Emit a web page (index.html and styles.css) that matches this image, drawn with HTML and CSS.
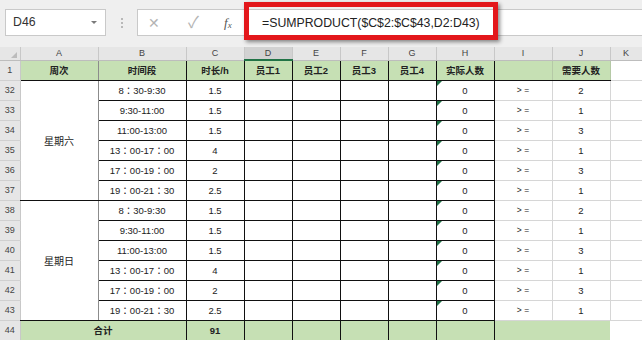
FILE: index.html
```html
<!DOCTYPE html>
<html lang="zh">
<head>
  <meta charset="utf-8">
  <title>排班表</title>
  <link rel="stylesheet" href="styles.css">
</head>
<body>
  <!-- 编辑栏 -->
  <div class="toolbar">
    <div class="namebox">D46<span class="dd"></span></div>
    <div class="grip"><i></i><i></i><i></i></div>
    <div class="fbar">
      <span class="ico x">✕</span>
      <span class="ico ok">✓</span>
      <span class="ico fx">f<sub>x</sub></span>
      <span class="formula">=SUMPRODUCT($C$2:$C$43,D2:D43)</span>
    </div>
  </div>

  <table class="sheet">
    <colgroup>
      <col style="width:20px"><col style="width:78px"><col style="width:88px"><col style="width:58px">
      <col style="width:48px"><col style="width:48px"><col style="width:48px"><col style="width:48px">
      <col style="width:58px"><col style="width:58px"><col style="width:58px"><col style="width:32px">
    </colgroup>
    <tr class="hdr">
      <th class="corner"><span></span></th>
      <th>A</th><th>B</th><th>C</th><th class="sel">D</th><th>E</th><th>F</th><th>G</th><th>H</th><th>I</th><th>J</th><th>K</th>
    </tr>
    <tr class="r1">
      <th class="rh">1</th>
      <td class="b a g">周次</td><td class="b g">时间段</td><td class="b g">时长/h</td>
      <td class="b g">员工1</td><td class="b g">员工2</td><td class="b g">员工3</td><td class="b g">员工4</td>
      <td class="b g">实际人数</td><td class="gl g"></td><td class="gl g">需要人数</td><td class="gl"></td>
    </tr>
    <tr>
      <th class="rh">32</th>
      <td class="b a day" rowspan="6">星期六</td>
      <td class="b t">8：30-9:30</td><td class="b">1.5</td>
      <td class="b"></td><td class="b"></td><td class="b"></td><td class="b"></td>
      <td class="b h"><span class="tri"></span>0</td><td class="gl ge">&gt; =</td><td class="gl">2</td><td class="gl"></td>
    </tr>
    <tr>
      <th class="rh">33</th>
      <td class="b t">9:30-11:00</td><td class="b">1.5</td>
      <td class="b"></td><td class="b"></td><td class="b"></td><td class="b"></td>
      <td class="b h"><span class="tri"></span>0</td><td class="gl ge">&gt; =</td><td class="gl">1</td><td class="gl"></td>
    </tr>
    <tr>
      <th class="rh">34</th>
      <td class="b t">11:00-13:00</td><td class="b">1.5</td>
      <td class="b"></td><td class="b"></td><td class="b"></td><td class="b"></td>
      <td class="b h"><span class="tri"></span>0</td><td class="gl ge">&gt; =</td><td class="gl">3</td><td class="gl"></td>
    </tr>
    <tr>
      <th class="rh">35</th>
      <td class="b t">13：00-17：00</td><td class="b">4</td>
      <td class="b"></td><td class="b"></td><td class="b"></td><td class="b"></td>
      <td class="b h"><span class="tri"></span>0</td><td class="gl ge">&gt; =</td><td class="gl">1</td><td class="gl"></td>
    </tr>
    <tr>
      <th class="rh">36</th>
      <td class="b t">17：00-19：00</td><td class="b">2</td>
      <td class="b"></td><td class="b"></td><td class="b"></td><td class="b"></td>
      <td class="b h"><span class="tri"></span>0</td><td class="gl ge">&gt; =</td><td class="gl">3</td><td class="gl"></td>
    </tr>
    <tr>
      <th class="rh">37</th>
      <td class="b t">19：00-21：30</td><td class="b">2.5</td>
      <td class="b"></td><td class="b"></td><td class="b"></td><td class="b"></td>
      <td class="b h"><span class="tri"></span>0</td><td class="gl ge">&gt; =</td><td class="gl">1</td><td class="gl"></td>
    </tr>
    <tr>
      <th class="rh">38</th>
      <td class="b a day" rowspan="6">星期日</td>
      <td class="b t">8：30-9:30</td><td class="b">1.5</td>
      <td class="b"></td><td class="b"></td><td class="b"></td><td class="b"></td>
      <td class="b h"><span class="tri"></span>0</td><td class="gl ge">&gt; =</td><td class="gl">2</td><td class="gl"></td>
    </tr>
    <tr>
      <th class="rh">39</th>
      <td class="b t">9:30-11:00</td><td class="b">1.5</td>
      <td class="b"></td><td class="b"></td><td class="b"></td><td class="b"></td>
      <td class="b h"><span class="tri"></span>0</td><td class="gl ge">&gt; =</td><td class="gl">1</td><td class="gl"></td>
    </tr>
    <tr>
      <th class="rh">40</th>
      <td class="b t">11:00-13:00</td><td class="b">1.5</td>
      <td class="b"></td><td class="b"></td><td class="b"></td><td class="b"></td>
      <td class="b h"><span class="tri"></span>0</td><td class="gl ge">&gt; =</td><td class="gl">3</td><td class="gl"></td>
    </tr>
    <tr>
      <th class="rh">41</th>
      <td class="b t">13：00-17：00</td><td class="b">4</td>
      <td class="b"></td><td class="b"></td><td class="b"></td><td class="b"></td>
      <td class="b h"><span class="tri"></span>0</td><td class="gl ge">&gt; =</td><td class="gl">1</td><td class="gl"></td>
    </tr>
    <tr>
      <th class="rh">42</th>
      <td class="b t">17：00-19：00</td><td class="b">2</td>
      <td class="b"></td><td class="b"></td><td class="b"></td><td class="b"></td>
      <td class="b h"><span class="tri"></span>0</td><td class="gl ge">&gt; =</td><td class="gl">3</td><td class="gl"></td>
    </tr>
    <tr>
      <th class="rh">43</th>
      <td class="b t">19：00-21：30</td><td class="b">2.5</td>
      <td class="b"></td><td class="b"></td><td class="b"></td><td class="b"></td>
      <td class="b h"><span class="tri"></span>0</td><td class="gl ge">&gt; =</td><td class="gl">1</td><td class="gl"></td>
    </tr>
    <tr class="total">
      <th class="rh">44</th>
      <td class="b g" colspan="2">合计</td><td class="b g">91</td>
      <td class="b g"></td><td class="b g"></td><td class="b g"></td><td class="b g"></td><td class="b g"></td>
      <td class="g" colspan="2"></td><td class="gl"></td>
    </tr>
  </table>
</body>
</html>
```

FILE: styles.css
```css
body {
  margin: 0;
  width: 642px; height: 340px;
  overflow: hidden;
  background: #fff;
  font-family: "Liberation Sans", "Noto Sans CJK SC", sans-serif;
  color: #222;
}

/* 编辑栏 */
.toolbar {
  height: 47px;
  box-sizing: border-box;
  padding: 9px 0 11px 5px;
  background: #efefef;
  display: flex;
}
.namebox {
  position: relative;
  width: 101px;
  box-sizing: border-box;
  border: 1px solid #c9c9c9;
  background: #fff;
  padding-left: 7px;
  font-size: 12.3px;
  line-height: 25px;
  color: #333;
}
.namebox .dd {
  position: absolute; right: 8px; top: 11px;
  border-left: 3px solid transparent; border-right: 3px solid transparent;
  border-top: 3px solid #7a7a7a;
}
.grip {
  width: 31px;
  display: flex; flex-direction: column; align-items: center; justify-content: center;
  gap: 2px;
}
.grip i { width: 2px; height: 2px; background: #b8b8b8; }
.fbar {
  flex: 1;
  border: 1px solid #c9c9c9; border-right: none;
  background: #fff;
  display: flex; align-items: center;
}
.ico { color: #b4b4b4; font-size: 14px; line-height: 1; }
.ico.x { margin-left: 10px; width: 40px; }
.ico.ok { width: 36px; font-size: 16px; }
.ico.fx {
  width: 36px;
  font-family: "Liberation Serif", serif; font-style: italic;
  color: #555; font-size: 13px;
}
.ico.fx sub { font-size: 9px; vertical-align: -1px; }
.formula {
  position: relative;
  margin-left: 2px;
  font-size: 12.3px;
  color: #222;
}
.formula::after {
  content: "";
  position: absolute;
  left: -18px; right: -18px; top: -14px; bottom: -10px;
  border: 5px solid #e3171b;
  box-shadow: 2px 2px 4px rgba(0,0,0,.45);
}

/* 表格 */
.sheet {
  border-collapse: collapse;
  table-layout: fixed;
  width: 642px;
  font-size: 9.5px;
}
.sheet th, .sheet td {
  padding: 0;
  text-align: center;
  vertical-align: middle;
  white-space: nowrap;
  overflow: hidden;
}
tr { height: 20px; }
.sheet tr.hdr { height: 12px; }
.hdr th {
  height: 12px;
  line-height: 11px;
  background: #e6e6e6;
  color: #444;
  font-weight: normal;
  font-size: 9px;
  border-right: 1px solid #c8c8c8;
  border-bottom: 1px solid #bdbdbd;
}
.hdr th.sel {
  background: #d2d2d2;
  border-bottom: 2px solid #217346;
}
.corner { position: relative; }
.corner span {
  position: absolute; right: 3px; bottom: 2px;
  border-left: 6px solid transparent;
  border-bottom: 6px solid #bcbcbc;
}
.rh {
  background: #e6e6e6;
  color: #444;
  font-weight: normal;
  font-size: 9px;
  border-right: 1px solid #c8c8c8;
  border-bottom: 1px solid #d0d0d0;
  vertical-align: bottom;
  line-height: 16px;
}
.b { border-right: 1px solid #111; border-bottom: 1px solid #111; }
.b.a { border-right-color: #8c8c8c; }
.gl { border-right: 1px solid #d6d6d6; border-bottom: 1px solid #d6d6d6; }
.g { background: #c6e0b4; }
.day { font-size: 10px; }
.t { font-family: "Liberation Sans", "Noto Sans CJK TC", sans-serif; }
.r1 td { font-weight: bold; }
.r1 .gl.g { border-right-color: #b5c9a6; border-bottom-color: #111; }
.h { position: relative; }
.tri {
  position: absolute; left: 0; top: 0;
  border-top: 5px solid #1e7145;
  border-right: 5px solid transparent;
}
.ge { font-size: 8.5px; }
.total td { font-weight: bold; }
```
